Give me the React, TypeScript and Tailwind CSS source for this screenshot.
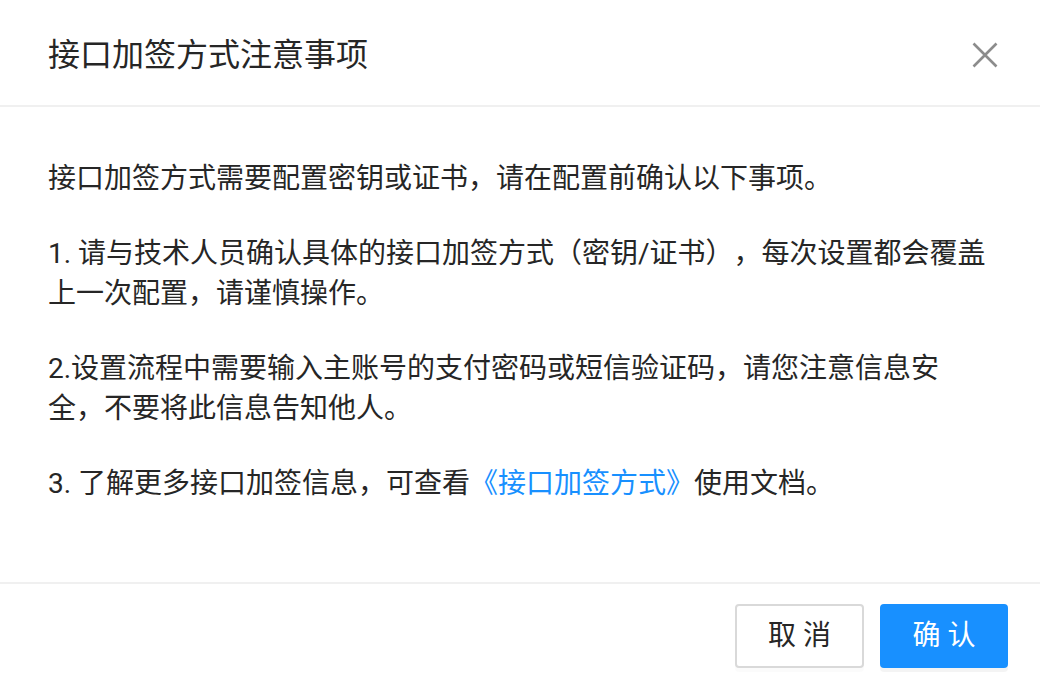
import React from "react";

const font = "font-['Roboto','Noto_Sans_CJK_SC',sans-serif]";

const CloseIcon = () => (
  <svg width="26" height="26" viewBox="0 0 26 26" fill="none">
    <path d="M1.5 1.5 24.5 24.5M24.5 1.5 1.5 24.5" stroke="#8c8c8c" strokeWidth="2.6" />
  </svg>
);

export default function App() {
  return (
    <div className={`h-screen w-full bg-white flex flex-col text-[#262626] [text-spacing-trim:space-all] ${font}`}>
      <div className="h-[107px] pt-[4px] flex items-center justify-between pl-[48px] pr-[42px] border-b-2 border-[#f0f0f0] shrink-0">
        <div className="text-[32px] leading-[44px]">接口加签方式注意事项</div>
        <button className="flex items-center justify-center">
          <CloseIcon />
        </button>
      </div>

      <div className="flex-1 px-[48px] pt-[52px] flex flex-col gap-[35px] text-[28px] leading-[40px]" lang="zh-CN">
        <p>接口加签方式需要配置密钥或证书，请在配置前确认以下事项。</p>
        <p>1. 请与技术人员确认具体的接口加签方式（密钥/证书），每次设置都会覆盖上一次配置，请谨慎操作。</p>
        <p>2.设置流程中需要输入主账号的支付密码或短信验证码，请您注意信息安全，不要将此信息告知他人。</p>
        <p>
          3. 了解更多接口加签信息，可查看<a className="text-[#1890ff]">《接口加签方式》</a>使用文档。
        </p>
      </div>

      <div className="shrink-0 border-t-2 border-[#f0f0f0] flex justify-end gap-[16px] px-[32px] py-[20px]">
        <button className="w-[129px] h-[64px] rounded-[4px] border-2 border-[#d9d9d9] bg-white text-[28px] text-[#262626] shadow-[0_4px_0_rgba(0,0,0,0.015)]">
          取 消
        </button>
        <button className="w-[128px] h-[64px] rounded-[4px] border-2 border-[#1890ff] bg-[#1890ff] text-[28px] text-white shadow-[0_4px_0_rgba(0,0,0,0.045)]">
          确 认
        </button>
      </div>
    </div>
  );
}
